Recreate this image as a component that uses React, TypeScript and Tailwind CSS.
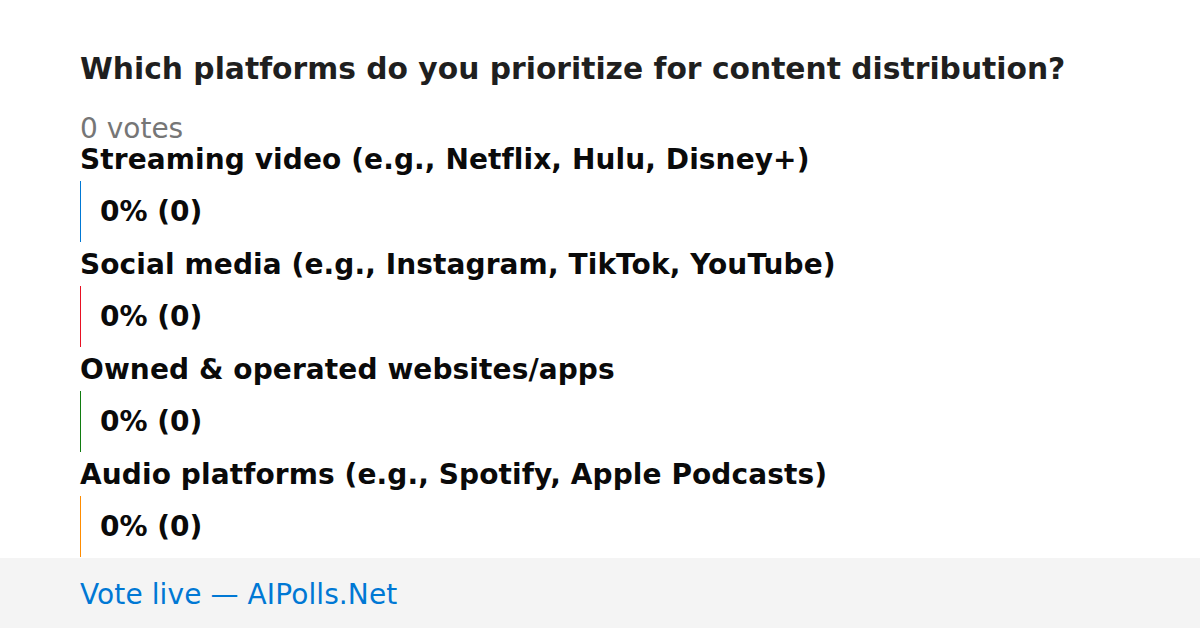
const OPTIONS = [
  { label: "Streaming video (e.g., Netflix, Hulu, Disney+)", color: "border-[#0078d4]" },
  { label: "Social media (e.g., Instagram, TikTok, YouTube)", color: "border-[#e81123]" },
  { label: "Owned & operated websites/apps", color: "border-[#107c10]" },
  { label: "Audio platforms (e.g., Spotify, Apple Podcasts)", color: "border-[#ff8c00]" },
] as const;

export default function App() {
  return (
    <div className="flex h-[628px] w-[1200px] flex-col overflow-hidden bg-white font-['DejaVu_Sans',sans-serif] text-[28px] leading-[31px]">
      <main className="min-h-0 flex-1 overflow-hidden px-20 pt-[53px]">
        <h1 className="mb-[29px] text-[29.75px] font-bold text-[#1f1f1f]">
          Which platforms do you prioritize for content distribution?
        </h1>
        <p className="text-[#767676]">0 votes</p>
        <ul>
          {OPTIONS.map((o) => (
            <li key={o.label} className="mb-[7px]">
              <div className="font-bold tracking-[0.1px] text-[#0a0a0a]">{o.label}</div>
              <div className={`mt-[6px] flex h-[61px] items-center border-l pl-[19px] ${o.color}`}>
                <span className="font-bold text-[#0a0a0a]">0% (0)</span>
              </div>
            </li>
          ))}
        </ul>
      </main>
      <footer className="flex h-[70px] shrink-0 items-center bg-[#f4f4f4] px-20 pt-[3px]">
        <span className="tracking-[0.1px] text-[#0078d4]">Vote live — AIPolls.Net</span>
      </footer>
    </div>
  );
}
